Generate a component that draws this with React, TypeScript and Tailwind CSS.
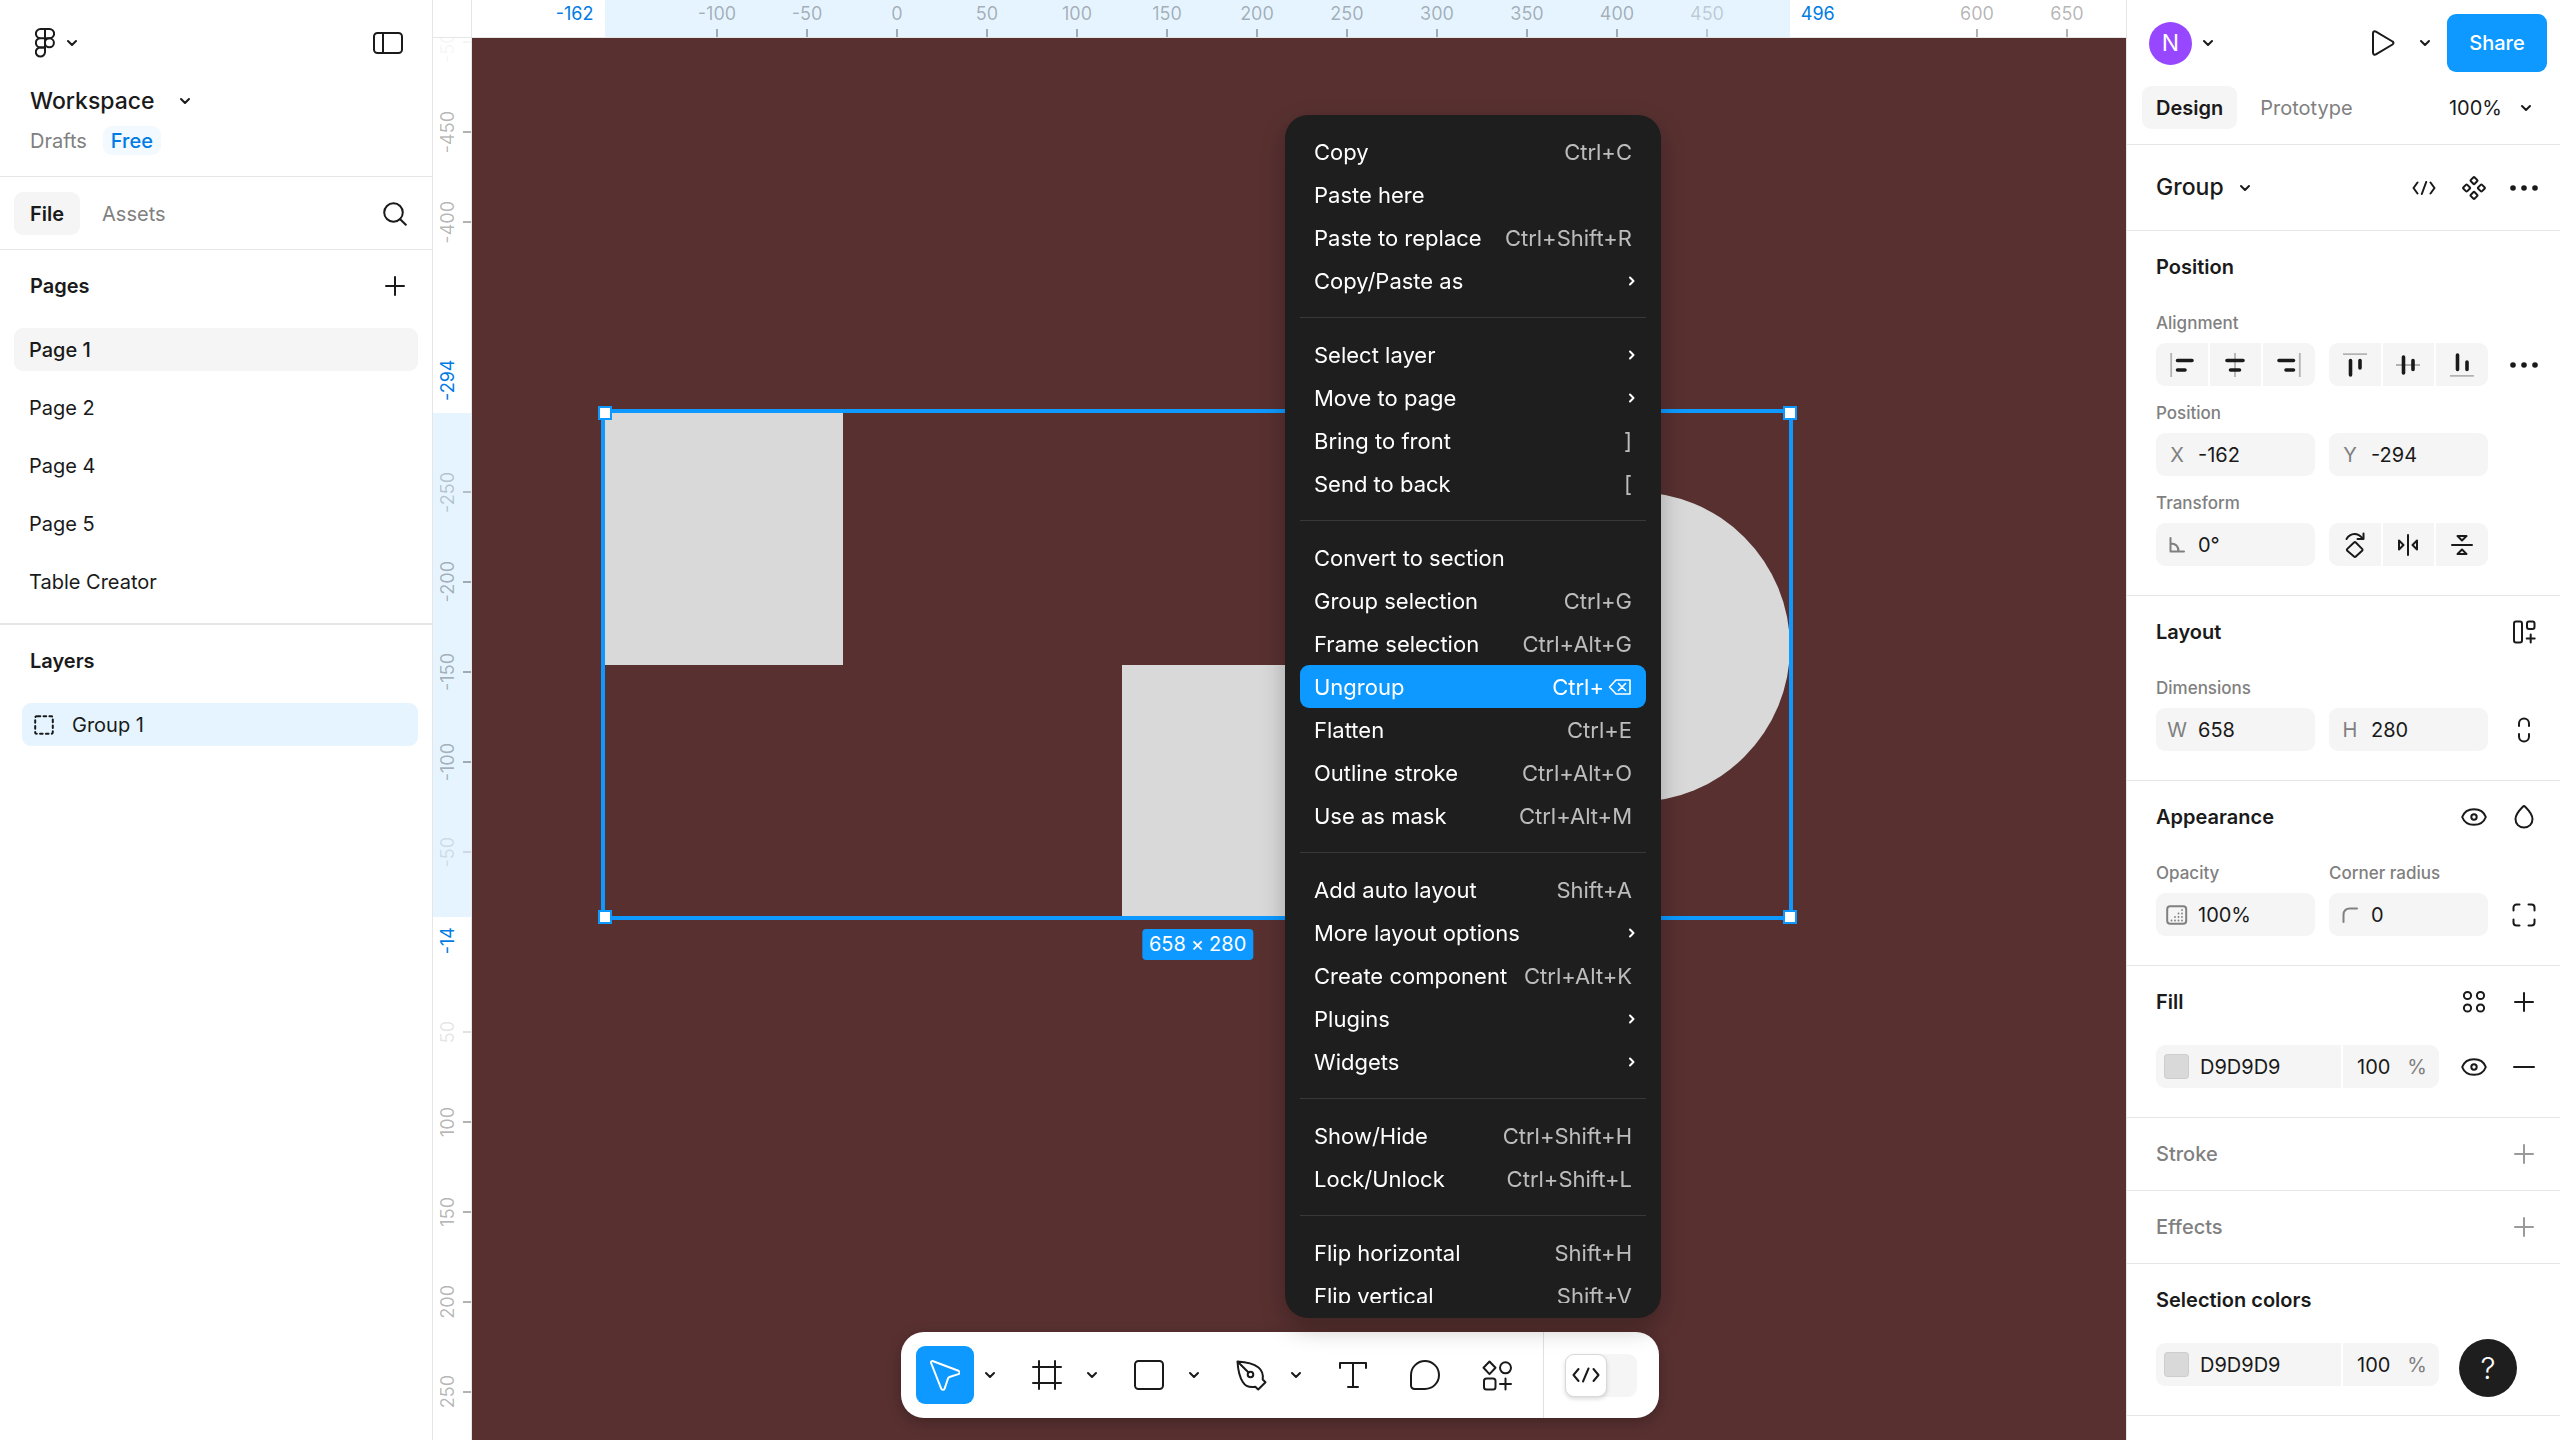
import type { ReactNode } from "react";

/* ---------- icons ---------- */

function Icon({ w, h, children, sw = 2, className = "" }: { w: number; h: number; children: ReactNode; sw?: number; className?: string }) {
  return (
    <svg
      width={w}
      height={h}
      viewBox={`0 0 ${w} ${h}`}
      fill="none"
      stroke="currentColor"
      strokeWidth={sw}
      strokeLinecap="round"
      strokeLinejoin="round"
      aria-hidden="true"
      className={`shrink-0 ${className}`}
    >
      {children}
    </svg>
  );
}

const Chevron = () => (
  <Icon w={12} h={8}>
    <path d="M2 2l4 4 4-4" />
  </Icon>
);

const ChevronRight = () => (
  <Icon w={8} h={12}>
    <path d="M2 2.5L5.5 6 2 9.5" />
  </Icon>
);

const Logo = () => (
  <Icon w={20} h={30}>
    <path d="M10 1H5.5a4.6 4.6 0 0 0 0 9.2H10zM10 1h4.5a4.6 4.6 0 0 1 0 9.2H10M10 10.2H5.5a4.6 4.6 0 0 0 0 9.2H10z" />
    <circle cx="14.4" cy="14.8" r="4.5" />
    <path d="M10 19.4H5.5a4.6 4.6 0 1 0 4.5 4.6z" />
  </Icon>
);

const PanelIcon = () => (
  <Icon w={30} h={22}>
    <rect x="1" y="1" width="28" height="20" rx="3.5" />
    <path d="M10 1v20" />
  </Icon>
);

const SearchIcon = () => (
  <Icon w={24} h={24}>
    <circle cx="10.5" cy="10.5" r="9.3" />
    <path d="M17.2 17.2l5.6 5.6" />
  </Icon>
);

const Plus = () => (
  <Icon w={20} h={20}>
    <path d="M10 1v18M1 10h18" />
  </Icon>
);

const Minus = () => (
  <Icon w={22} h={20}>
    <path d="M1 10h20" />
  </Icon>
);

const GroupIcon = () => (
  <Icon w={20} h={20}>
    <rect x="1.2" y="1.2" width="17.6" height="17.6" rx="1.5" strokeDasharray="2.6 3.27" strokeDashoffset="-1" />
  </Icon>
);

const PlayIcon = () => (
  <Icon w={24} h={26}>
    <path d="M2 3.2v19.6c0 1.6 1.6 2.4 2.9 1.6l16.6-9.9c1.3-.8 1.3-2.3 0-3L4.9 1.6C3.6.8 2 1.6 2 3.2z" />
  </Icon>
);

const CodeIcon = () => (
  <Icon w={24} h={14}>
    <path d="M5.5 1.5L1.5 7l4 5.5M14.2 1L9.8 13M18.5 1.5L22.5 7l-4 5.5" />
  </Icon>
);

const ComponentIcon = () => (
  <Icon w={24} h={24}>
    {[
      [12, 4.6],
      [12, 19.4],
      [4.6, 12],
      [19.4, 12],
    ].map(([cx, cy]) => (
      <rect key={`${cx}-${cy}`} x={cx - 2.7} y={cy - 2.7} width="5.4" height="5.4" rx="1" transform={`rotate(45 ${cx} ${cy})`} />
    ))}
  </Icon>
);

const Dots = () => (
  <Icon w={28} h={6} sw={0}>
    <g fill="currentColor">
      <circle cx="3" cy="3" r="2.8" />
      <circle cx="14" cy="3" r="2.8" />
      <circle cx="25" cy="3" r="2.8" />
    </g>
  </Icon>
);

const AlignLeft = () => (
  <Icon w={24} h={24} sw={3.6}>
    <path d="M1.2 0v24" stroke="#b3b3b3" strokeWidth="1.8" strokeLinecap="butt" />
    <path d="M7.5 7.5h14.5M7.5 17h7.5" />
  </Icon>
);
const AlignCenterH = () => (
  <Icon w={24} h={24} sw={3.6}>
    <path d="M12 0v24" stroke="#b3b3b3" strokeWidth="1.8" strokeLinecap="butt" />
    <path d="M4 7.5h16M7.5 17h9" />
  </Icon>
);
const AlignRight = () => (
  <Icon w={24} h={24} sw={3.6}>
    <path d="M22.8 0v24" stroke="#b3b3b3" strokeWidth="1.8" strokeLinecap="butt" />
    <path d="M2 7.5h14.5M9 17h7.5" />
  </Icon>
);
const AlignTop = () => (
  <Icon w={24} h={24} sw={3.6}>
    <path d="M0 1.2h24" stroke="#b3b3b3" strokeWidth="1.8" strokeLinecap="butt" />
    <path d="M7.5 7.5v14.5M17 7.5v7.5" />
  </Icon>
);
const AlignMiddle = () => (
  <Icon w={24} h={24} sw={3.6}>
    <path d="M0 12h24" stroke="#b3b3b3" strokeWidth="1.8" strokeLinecap="butt" />
    <path d="M7.5 4v16M17 7.5v9" />
  </Icon>
);
const AlignBottom = () => (
  <Icon w={24} h={24} sw={3.6}>
    <path d="M0 22.8h24" stroke="#b3b3b3" strokeWidth="1.8" strokeLinecap="butt" />
    <path d="M7.5 2v14.5M17 9v7.5" />
  </Icon>
);

const AngleIcon = () => (
  <Icon w={16} h={16}>
    <path d="M1.5 1v13.5H15M1.5 6.5c5 0 8 3 8 8" />
  </Icon>
);
const RotateIcon = () => (
  <Icon w={20} h={26}>
    <path d="M1.5 7C5.5.5 13 .5 17.5 6.5M18.5 1.5v5.5h-6" />
    <path d="M9 10.5l-6.7 6.4c-.6.6-.6 1.3 0 1.8L9 24.5c.6.6 1.3.6 1.8 0l6.3-5.8c.6-.5.6-1.2 0-1.8l-6.3-6.4c-.5-.6-1.2-.6-1.8 0z" />
  </Icon>
);
const FlipH = () => (
  <Icon w={22} h={22}>
    <path d="M11 1v20M2 6.500v9L6.500 11zM20 6.500v9L15.500 11z" />
  </Icon>
);
const FlipV = () => (
  <Icon w={22} h={22}>
    <path d="M1 11h20M6.500 2h9L11 6.500zM6.500 20h9L11 15.500z" />
  </Icon>
);
const AutoLayoutIcon = () => (
  <Icon w={24} h={24}>
    <rect x="2" y="1.5" width="8" height="21" rx="2" />
    <rect x="15" y="1.5" width="7.5" height="7.5" rx="2" />
    <path d="M18.7 14.5v8M14.7 18.5h8" />
  </Icon>
);
const RatioIcon = () => (
  <Icon w={14} h={26}>
    <path d="M2 9V6.500a5 5 0 0 1 10 0V9M2 17v2.500a5 5 0 0 0 10 0V17" />
  </Icon>
);
const EyeIcon = () => (
  <Icon w={26} h={18}>
    <path d="M1.2 9C3 4 7.500 1.200 13 1.200S23 4 24.800 9C23 14 18.500 16.800 13 16.800S3 14 1.200 9z" />
    <circle cx="13" cy="9" r="2.7" />
  </Icon>
);
const DropIcon = () => (
  <Icon w={20} h={24}>
    <path d="M8.800 1.700C5 5.500 1.500 9.500 1.500 14c0 5 3.500 8.500 8.500 8.500s8.500-3.500 8.500-8.500c0-4.500-3.500-8.500-7.300-12.300-.7-.7-1.700-.7-2.400 0z" />
  </Icon>
);
const OpacityIcon = () => (
  <Icon w={22} h={20}>
    <rect x="1.2" y="1.2" width="19" height="17.6" rx="3" />
    <g fill="currentColor" stroke="none">
      {[
        [16, 5], [16, 8.5], [16, 12], [16, 15.5], [12.5, 8.5], [12.5, 12], [12.5, 15.5], [9, 12], [9, 15.5], [5.5, 15.5],
      ].map(([x, y]) => (
        <circle key={`${x}-${y}`} cx={x} cy={y} r="0.9" />
      ))}
    </g>
  </Icon>
);
const CornerIcon = () => (
  <Icon w={16} h={16}>
    <path d="M1.5 15V8c0-4 2.5-6.5 6.500-6.500h7" />
  </Icon>
);
const CornersIcon = () => (
  <Icon w={24} h={24}>
    <path d="M1.500 7.500v-3a3 3 0 0 1 3-3h3M16.500 1.500h3a3 3 0 0 1 3 3v3M22.500 16.500v3a3 3 0 0 1-3 3h-3M7.500 22.500h-3a3 3 0 0 1-3-3v-3" />
  </Icon>
);
const StylesIcon = () => (
  <Icon w={24} h={24}>
    <circle cx="5.500" cy="5.500" r="3.600" />
    <circle cx="18.500" cy="5.500" r="3.600" />
    <circle cx="5.500" cy="18" r="3.600" />
    <circle cx="18.500" cy="18" r="3.600" />
  </Icon>
);

const CursorIcon = () => (
  <Icon w={30} h={31}>
    <path d="M1.100 3C.700 1.600 1.900.700 3.200 1.200l25.200 9.600c1.600.700 1.600 2.700 0 3.300L19.500 17c-.6.200-1.100.7-1.400 1.300l-3.500 10.300c-.6 1.600-2.800 1.700-3.400.1z" />
  </Icon>
);
const FrameIcon = () => (
  <Icon w={30} h={30}>
    <path d="M7 1v28M23 1v28M1 7h28M1 23h28" />
  </Icon>
);
const RectIcon = () => (
  <Icon w={30} h={30}>
    <rect x="1" y="1" width="28" height="28" rx="3.5" />
  </Icon>
);
const PenIcon = () => (
  <Icon w={31} h={31}>
    <path d="M1.500 1.500C10 2 18 4 22.500 7.500c4 3.200 4.800 7.500 4.200 12l2.800 2.700-7.300 7.300-2.900-2.700C14.500 27.600 9.500 26.500 6.800 22 3.500 17 2 10 1.500 1.500zM1.500 1.500l11 11" />
    <circle cx="14.5" cy="14.5" r="2.8" />
  </Icon>
);
const TextIcon = () => (
  <Icon w={28} h={28}>
    <path d="M1 7V2h26v5M14 2v24M9 26h10" />
  </Icon>
);
const CommentIcon = () => (
  <Icon w={30} h={30}>
    <path d="M1 15a14 14 0 1 1 14 14H4.500A3.500 3.500 0 0 1 1 25.500z" />
  </Icon>
);
const ActionsIcon = () => (
  <Icon w={31} h={31}>
    <path d="M7.500 1.500l6 6.300-6 6.300-6-6.300z" />
    <circle cx="23.5" cy="7.8" r="5.5" />
    <rect x="2" y="18.5" width="11.5" height="11" rx="2.5" />
    <path d="M23.500 18.500v11M18 24h11" />
  </Icon>
);
const BackspaceIcon = () => (
  <Icon w={24} h={18} sw={1.6}>
    <path d="M1.500 9L8 2h14v14H8zM10.500 5.500l7 7M17.500 5.500l-7 7" />
  </Icon>
);

/* ---------- left sidebar ---------- */

const pages = ["Page 1", "Page 2", "Page 4", "Page 5", "Table Creator"];

function LeftPanel() {
  return (
    <aside className="flex w-[433px] shrink-0 flex-col border-r border-[#e6e6e6] bg-white">
      <header className="border-b border-[#e6e6e6] pb-[21px]">
        <div className="flex h-[86px] items-center justify-between pr-[29px] pl-[35px]">
          <button aria-label="Main menu" className="flex items-center gap-[11px]">
            <Logo />
            <Chevron />
          </button>
          <button aria-label="Toggle sidebar">
            <PanelIcon />
          </button>
        </div>
        <button className="flex h-[30px] items-center gap-6 pl-[30px] text-[23px] font-medium">
          Workspace
          <Chevron />
        </button>
        <div className="mt-[10px] flex h-[29px] items-center gap-4 pl-[30px]">
          <a href="#drafts" className="text-[#808080]">Drafts</a>
          <span className="flex h-[29px] items-center rounded-[9px] bg-[#f2f9ff] px-2 font-medium text-[#007be5]">Free</span>
        </div>
      </header>

      <div className="flex items-center border-b border-[#e6e6e6] px-[14px] pt-[15px] pb-[14px]">
        <button className="h-[43px] rounded-[9px] bg-[#f5f5f5] px-4 font-semibold">File</button>
        <button className="ml-[6px] h-[43px] px-4 text-[#808080]">Assets</button>
        <button aria-label="Search" className="mr-[2px] ml-auto flex h-[43px] w-[43px] items-center justify-center">
          <SearchIcon />
        </button>
      </div>

      <section className="border-b-2 border-[#e6e6e6] px-[14px] pb-5">
        <div className="flex h-[72px] items-center justify-between pl-4">
          <h2 className="font-semibold">Pages</h2>
          <button aria-label="Add page" className="mr-[2px] flex h-[43px] w-[43px] items-center justify-center">
            <Plus />
          </button>
        </div>
        <ul className="flex flex-col gap-[15px] pt-[6px]">
          {pages.map((page, i) => (
            <li key={page}>
              <button className={`flex h-[43px] w-full items-center rounded-[9px] px-[15px] ${i === 0 ? "bg-[#f5f5f5] font-medium" : ""}`}>{page}</button>
            </li>
          ))}
        </ul>
      </section>

      <section className="pr-[14px] pl-[22px]">
        <h2 className="flex h-[72px] items-center pl-2 font-semibold">Layers</h2>
        <button className="mt-[6px] flex h-[43px] w-full items-center gap-[18px] rounded-[9px] bg-[#e5f4ff] px-3">
          <GroupIcon />
          Group 1
        </button>
      </section>
    </aside>
  );
}

/* ---------- canvas ---------- */

const SCALE = 1.8;
const RULER_W = 39;
const RULER_H = 38;
const toX = (v: number) => 425 + v * SCALE;
const toY = (v: number) => 904 + v * SCALE;

const topMarks: [number, number][] = [
  [-100, 1], [-50, 1], [0, 1], [50, 1], [100, 1], [150, 1], [200, 1], [250, 1], [300, 1], [350, 1], [400, 1], [450, 0.6], [600, 1], [650, 1],
];
const sideMarks: [number, number][] = [
  [-500, 0.12], [-450, 1], [-400, 1], [-250, 0.7], [-200, 1], [-150, 1], [-100, 1], [-50, 0.35], [50, 0.35], [100, 1], [150, 1], [200, 1], [250, 1],
];

const box = { x: -162, y: -294, w: 658, h: 280 };

function TopRuler() {
  return (
    <div className="relative overflow-hidden border-b border-[#e6e6e6] bg-white text-[18px] leading-none text-black/30">
      <div className="absolute inset-y-0 bg-[#e5f4ff]" style={{ left: toX(box.x), width: box.w * SCALE }} />
      {topMarks.map(([v, o]) => (
        <div key={v} className="absolute inset-y-0 flex w-20 -translate-x-1/2 flex-col items-center justify-between pt-[5px]" style={{ left: toX(v), opacity: o }}>
          <span>{v}</span>
          <i className="h-2 w-[2px] bg-black/30" />
        </div>
      ))}
      <span className="absolute top-[5px] -translate-x-full text-[#007be5]" style={{ left: toX(box.x) - 12 }}>{box.x}</span>
      <span className="absolute top-[5px] text-[#007be5]" style={{ left: toX(box.x + box.w) + 11 }}>{box.x + box.w}</span>
    </div>
  );
}

function SideRuler() {
  return (
    <div className="relative overflow-hidden border-r border-[#e6e6e6] bg-white text-[18px] leading-none text-black/30">
      <div className="absolute inset-x-0 bg-[#e5f4ff]" style={{ top: toY(box.y), height: box.h * SCALE }} />
      {sideMarks.map(([v, o]) => (
        <div key={v} className="absolute inset-x-0 flex h-20 -translate-y-1/2 items-center justify-between pl-[6px]" style={{ top: toY(v), opacity: o }}>
          <span className="rotate-180 [writing-mode:vertical-rl]">{v}</span>
          <i className="h-[2px] w-2 bg-black/30" />
        </div>
      ))}
      <span className="absolute left-[6px] -translate-y-full rotate-180 text-[#007be5] [writing-mode:vertical-rl]" style={{ top: toY(box.y) - 12 }}>{box.y}</span>
      <span className="absolute left-[6px] rotate-180 text-[#007be5] [writing-mode:vertical-rl]" style={{ top: toY(box.y + box.h) + 10 }}>{box.y + box.h}</span>
    </div>
  );
}

function Handle({ x, y }: { x: number; y: number }) {
  return <i className="absolute h-[14px] w-[14px] -translate-x-1/2 -translate-y-1/2 border-2 border-[#0d99ff] bg-white" style={{ left: x, top: y }} />;
}

function Artboard() {
  const left = toX(box.x);
  const top = toY(box.y);
  const right = toX(box.x + box.w);
  const bottom = toY(box.y + box.h);
  return (
    <div className="relative overflow-hidden bg-[#583030]">
      <div className="absolute bg-[#d9d9d9]" style={{ left, top, width: 132 * SCALE, height: 140 * SCALE }} />
      <div className="absolute bg-[#d9d9d9]" style={{ left: toX(125), top: toY(-154), width: 132 * SCALE, height: 140 * SCALE }} />
      <div className="absolute rounded-full bg-[#d9d9d9]" style={{ left: right - 310, top: toY(-250), width: 310, height: 310 }} />
      <div className="absolute border-4 border-[#0d99ff]" style={{ left: left - 4, top: top - 4, width: right - left + 7, height: bottom - top + 7 }} />
      <Handle x={left} y={top} />
      <Handle x={right} y={top} />
      <Handle x={left} y={bottom} />
      <Handle x={right} y={bottom} />
      <span
        className="absolute flex h-[31px] -translate-x-1/2 items-center gap-[5px] rounded-[4px] bg-[#0d99ff] px-[7px] whitespace-nowrap text-white"
        style={{ left: (left + right) / 2, top: bottom + 12 }}
      >
        <span>658</span>
        <span>×</span>
        <span>280</span>
      </span>
    </div>
  );
}

/* ---------- toolbar ---------- */

function Tool({ label, icon, menu, active }: { label: string; icon: ReactNode; menu?: boolean; active?: boolean }) {
  return (
    <div className="flex items-center gap-[1px]">
      <button aria-label={label} className={`flex h-[58px] w-[58px] items-center justify-center rounded-[9px] ${active ? "bg-[#0d99ff] text-white" : ""}`}>
        {icon}
      </button>
      {menu && (
        <button aria-label={`${label} options`} className="flex h-[58px] w-[29px] items-center justify-center">
          <Chevron />
        </button>
      )}
    </div>
  );
}

function Toolbar() {
  return (
    <nav
      aria-label="Tools"
      className="fixed bottom-[22px] left-1/2 flex h-[86px] -translate-x-1/2 items-stretch rounded-[23px] bg-white shadow-[0_4px_14px_rgba(0,0,0,0.25)]"
    >
      <div className="flex items-center gap-[14px] pr-[17px] pl-[15px]">
        <Tool label="Move" icon={<CursorIcon />} menu active />
        <Tool label="Frame" icon={<FrameIcon />} menu />
        <Tool label="Rectangle" icon={<RectIcon />} menu />
        <Tool label="Pen" icon={<PenIcon />} menu />
        <Tool label="Text" icon={<TextIcon />} />
        <Tool label="Comment" icon={<CommentIcon />} />
        <Tool label="Actions" icon={<ActionsIcon />} />
      </div>
      <div className="flex items-center border-l border-[#e0e0e0] pr-[22px] pl-[21px]">
        <button role="switch" aria-checked="false" aria-label="Dev Mode" className="flex h-[43px] w-[72px] rounded-[9px] bg-[#f5f5f5]">
          <span className="flex h-[43px] w-[42px] items-center justify-center rounded-[9px] border border-[#d9d9d9] bg-white shadow-[0_2px_4px_rgba(0,0,0,0.15)]">
            <Icon w={28} h={16}>
              <path d="M6.500 2L1.500 8l5 6M16.500 1.500L11 14.500M21.500 2l5 6-5 6" />
            </Icon>
          </span>
        </button>
      </div>
    </nav>
  );
}

/* ---------- context menu ---------- */

type Item = { label: string; keys?: string; sub?: boolean; backspace?: boolean; active?: boolean };

const menuGroups: Item[][] = [
  [
    { label: "Copy", keys: "Ctrl+C" },
    { label: "Paste here" },
    { label: "Paste to replace", keys: "Ctrl+Shift+R" },
    { label: "Copy/Paste as", sub: true },
  ],
  [
    { label: "Select layer", sub: true },
    { label: "Move to page", sub: true },
    { label: "Bring to front", keys: "]" },
    { label: "Send to back", keys: "[" },
  ],
  [
    { label: "Convert to section" },
    { label: "Group selection", keys: "Ctrl+G" },
    { label: "Frame selection", keys: "Ctrl+Alt+G" },
    { label: "Ungroup", keys: "Ctrl+", backspace: true, active: true },
    { label: "Flatten", keys: "Ctrl+E" },
    { label: "Outline stroke", keys: "Ctrl+Alt+O" },
    { label: "Use as mask", keys: "Ctrl+Alt+M" },
  ],
  [
    { label: "Add auto layout", keys: "Shift+A" },
    { label: "More layout options", sub: true },
    { label: "Create component", keys: "Ctrl+Alt+K" },
    { label: "Plugins", sub: true },
    { label: "Widgets", sub: true },
  ],
  [
    { label: "Show/Hide", keys: "Ctrl+Shift+H" },
    { label: "Lock/Unlock", keys: "Ctrl+Shift+L" },
  ],
  [
    { label: "Flip horizontal", keys: "Shift+H" },
    { label: "Flip vertical", keys: "Shift+V" },
  ],
];

function ContextMenu() {
  return (
    <div
      role="menu"
      className="fixed top-[115px] left-[1285px] w-[376px] rounded-[23px] bg-[#1e1e1e] px-[15px] py-[15px] text-[22px] text-white shadow-[0_10px_24px_rgba(0,0,0,0.25)]"
    >
      <div className="max-h-[1173px] overflow-hidden">
        {menuGroups.map((group, g) => (
          <div key={group[0].label} className={g > 0 ? "mt-[15px] border-t border-[#383838] pt-[15px]" : ""}>
            {group.map((item) => (
              <button
                key={item.label}
                role="menuitem"
                className={`flex h-[43px] w-full items-center justify-between rounded-[9px] px-[14px] whitespace-nowrap ${item.active ? "bg-[#0d99ff]" : ""}`}
              >
                {item.label}
                {item.keys && (
                  <span className={`flex items-center gap-1 ${item.active ? "text-white" : "text-white/70"}`}>
                    {item.keys}
                    {item.backspace && <BackspaceIcon />}
                  </span>
                )}
                {item.sub && <span className="-mr-1"><ChevronRight /></span>}
              </button>
            ))}
          </div>
        ))}
      </div>
    </div>
  );
}

/* ---------- right sidebar ---------- */

function IconButton({ label, children, muted }: { label: string; children: ReactNode; muted?: boolean }) {
  return (
    <button aria-label={label} className={`flex h-[43px] w-[43px] shrink-0 items-center justify-center ${muted ? "text-[#9a9a9a]" : ""}`}>
      {children}
    </button>
  );
}

function Section({ title, actions, muted, children }: { title: string; actions?: ReactNode; muted?: boolean; children?: ReactNode }) {
  return (
    <section className={`border-b border-[#e6e6e6] pr-[15px] pl-[29px] ${children ? "pb-[29px]" : ""}`}>
      <div className="flex h-[72px] items-center gap-[7px]">
        <h2 className={`mr-auto ${muted ? "font-medium text-[#808080]" : "font-semibold"}`}>{title}</h2>
        {actions}
      </div>
      {children}
    </section>
  );
}

const Caption = ({ children }: { children: ReactNode }) => (
  <span className="flex h-10 items-center text-[17px] font-medium text-[#808080]">{children}</span>
);

const row = "grid grid-cols-[1fr_1fr_43px] gap-x-[14px]";

function Field({ label, prefix, value }: { label: string; prefix: ReactNode; value: string }) {
  return (
    <label className="flex h-[43px] items-center rounded-[9px] bg-[#f5f5f5]">
      <span className="flex w-[42px] shrink-0 items-center justify-center text-[#808080]">{prefix}</span>
      <input aria-label={label} defaultValue={value} className="w-full min-w-0 bg-transparent outline-none" />
    </label>
  );
}

function Segments({ items }: { items: [string, ReactNode][] }) {
  return (
    <div className="grid h-[43px] grid-cols-3 gap-[2px] overflow-hidden rounded-[9px]">
      {items.map(([label, icon]) => (
        <button key={label} aria-label={label} className="flex items-center justify-center bg-[#f5f5f5]">
          {icon}
        </button>
      ))}
    </div>
  );
}

function ColorField({ name }: { name: string }) {
  return (
    <div className="mr-[6px] flex h-[43px] flex-1 gap-[2px] overflow-hidden rounded-[9px]">
      <label className="flex flex-1 items-center gap-[11px] bg-[#f5f5f5] pl-2">
        <span className="h-[25px] w-[25px] shrink-0 rounded-[4px] border border-black/5 bg-[#d9d9d9]" />
        <input aria-label={`${name} color`} defaultValue="D9D9D9" className="w-full min-w-0 bg-transparent outline-none" />
      </label>
      <label className="flex w-[96px] items-center bg-[#f5f5f5] pr-3 pl-[14px]">
        <input aria-label={`${name} opacity`} defaultValue="100" className="w-full min-w-0 bg-transparent outline-none" />
        <span className="text-[#808080]">%</span>
      </label>
    </div>
  );
}

function RightPanel() {
  return (
    <aside className="flex w-[434px] shrink-0 flex-col border-l border-[#e6e6e6] bg-white">
      <header className="border-b border-[#e6e6e6] pb-[15px]">
        <div className="flex h-[86px] items-center pr-[13px] pl-[22px]">
          <button aria-label="Account" className="flex items-center gap-[10px]">
            <span className="flex h-[43px] w-[43px] items-center justify-center rounded-full bg-[#9747ff] text-[23px] text-white">N</span>
            <Chevron />
          </button>
          <button aria-label="Present" className="ml-auto">
            <PlayIcon />
          </button>
          <button aria-label="Present options" className="ml-6">
            <Chevron />
          </button>
          <button className="ml-4 h-[58px] w-[100px] rounded-[9px] bg-[#0d99ff] font-medium text-white">Share</button>
        </div>
        <div className="flex items-center pr-[28px] pl-[15px]">
          <button className="h-[43px] rounded-[9px] bg-[#f5f5f5] px-[14px] font-semibold">Design</button>
          <button className="ml-2 h-[43px] px-[15px] text-[#808080]">Prototype</button>
          <button className="ml-auto flex items-center gap-[18px]">
            100%
            <Chevron />
          </button>
        </div>
      </header>

      <section className="flex h-[86px] items-center gap-[7px] border-b border-[#e6e6e6] pr-[15px] pl-[29px]">
        <button className="mr-auto flex items-center gap-[15px] text-[23px] font-medium">
          Group
          <Chevron />
        </button>
        <IconButton label="View code"><CodeIcon /></IconButton>
        <IconButton label="Create component"><ComponentIcon /></IconButton>
        <IconButton label="More"><Dots /></IconButton>
      </section>

      <Section title="Position">
        <Caption>Alignment</Caption>
        <div className={row}>
          <Segments items={[["Align left", <AlignLeft />], ["Align horizontal centers", <AlignCenterH />], ["Align right", <AlignRight />]]} />
          <Segments items={[["Align top", <AlignTop />], ["Align vertical centers", <AlignMiddle />], ["Align bottom", <AlignBottom />]]} />
          <IconButton label="More alignment"><Dots /></IconButton>
        </div>
        <div className="mt-[7px]"><Caption>Position</Caption></div>
        <div className={row}>
          <Field label="X position" prefix="X" value="-162" />
          <Field label="Y position" prefix="Y" value="-294" />
        </div>
        <div className="mt-[7px]"><Caption>Transform</Caption></div>
        <div className={row}>
          <Field label="Rotation" prefix={<AngleIcon />} value="0°" />
          <Segments items={[["Rotate", <RotateIcon />], ["Flip horizontal", <FlipH />], ["Flip vertical", <FlipV />]]} />
        </div>
      </Section>

      <Section title="Layout" actions={<IconButton label="Use auto layout"><AutoLayoutIcon /></IconButton>}>
        <Caption>Dimensions</Caption>
        <div className={row}>
          <Field label="Width" prefix="W" value="658" />
          <Field label="Height" prefix="H" value="280" />
          <IconButton label="Lock aspect ratio"><RatioIcon /></IconButton>
        </div>
      </Section>

      <Section
        title="Appearance"
        actions={
          <>
            <IconButton label="Toggle visibility"><EyeIcon /></IconButton>
            <IconButton label="Blend mode"><DropIcon /></IconButton>
          </>
        }
      >
        <div className={row}>
          <Caption>Opacity</Caption>
          <Caption>Corner radius</Caption>
        </div>
        <div className={row}>
          <Field label="Opacity" prefix={<OpacityIcon />} value="100%" />
          <Field label="Corner radius" prefix={<CornerIcon />} value="0" />
          <IconButton label="Individual corners"><CornersIcon /></IconButton>
        </div>
      </Section>

      <Section
        title="Fill"
        actions={
          <>
            <IconButton label="Styles"><StylesIcon /></IconButton>
            <IconButton label="Add fill"><Plus /></IconButton>
          </>
        }
      >
        <div className="flex gap-[7px] pt-[7px]">
          <ColorField name="Fill" />
          <IconButton label="Toggle fill"><EyeIcon /></IconButton>
          <IconButton label="Remove fill"><Minus /></IconButton>
        </div>
      </Section>

      <Section title="Stroke" muted actions={<IconButton label="Add stroke" muted><Plus /></IconButton>} />
      <Section title="Effects" muted actions={<IconButton label="Add effect" muted><Plus /></IconButton>} />

      <Section title="Selection colors">
        <div className="flex pt-[7px] pr-[100px]">
          <ColorField name="Selection" />
        </div>
      </Section>
    </aside>
  );
}

export default function App() {
  return (
    <div className="flex h-screen w-full overflow-hidden bg-white font-['Inter',sans-serif] text-[20px] leading-none text-[#1a1a1a]">
      <LeftPanel />
      <main className="grid min-w-0 flex-1" style={{ gridTemplateColumns: `${RULER_W}px 1fr`, gridTemplateRows: `${RULER_H}px 1fr` }}>
        <div className="border-r border-b border-[#e6e6e6] bg-white" />
        <TopRuler />
        <SideRuler />
        <Artboard />
      </main>
      <RightPanel />
      <Toolbar />
      <ContextMenu />
      <button
        aria-label="Help"
        className="fixed right-[43px] bottom-[43px] flex h-[58px] w-[58px] items-center justify-center rounded-full bg-[#1e1e1e] text-[30px] font-light text-white"
      >
        ?
      </button>
    </div>
  );
}
